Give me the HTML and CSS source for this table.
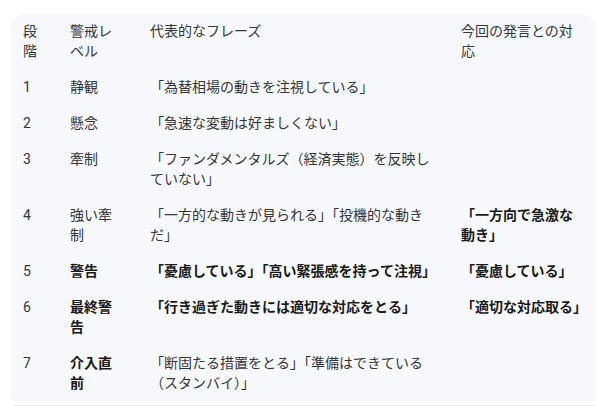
FILE: index.html
```html
<!DOCTYPE html>
<html lang="ja">
<head>
<meta charset="utf-8">
<link rel="stylesheet" href="styles.css">
</head>
<body>
<div class="wrap">
  <div class="card">
    <table class="tbl">
      <colgroup>
        <col class="c1"><col class="c2"><col class="c3"><col class="c4">
      </colgroup>
      <thead>
        <tr><th>段階</th><th>警戒レベル</th><th>代表的なフレーズ</th><th class="last">今回の発言との対応</th></tr>
      </thead>
      <tbody>
        <tr><td>1</td><td>静観</td><td>「為替相場の動きを注視している」</td><td class="last"></td></tr>
        <tr><td>2</td><td>懸念</td><td>「急速な変動は好ましくない」</td><td class="last"></td></tr>
        <tr><td>3</td><td>牽制</td><td>「ファンダメンタルズ（経済実態）を反映していない」</td><td class="last"></td></tr>
        <tr><td>4</td><td>強い牽制</td><td>「一方的な動きが見られる」「投機的な動きだ」</td><td class="last"><b>「一方向で急激な動き」</b></td></tr>
        <tr><td>5</td><td><b>警告</b></td><td><b>「憂慮している」「高い緊張感を持って注視」</b></td><td class="last"><b>「憂慮している」</b></td></tr>
        <tr><td>6</td><td><b>最終警告</b></td><td><b>「行き過ぎた動きには適切な対応をとる」</b></td><td class="last"><b>「適切な対応取る」</b></td></tr>
        <tr><td>7</td><td><b>介入直前</b></td><td>「断固たる措置をとる」「準備はできている（スタンバイ）」</td><td class="last"></td></tr>
      </tbody>
    </table>
  </div>
  <div class="rule"></div>
</div>
</body>
</html>
```

FILE: styles.css
```css
html, body {
  margin: 0;
  padding: 0;
  background: #ffffff;
}
body {
  font-family: Roboto, "Noto Sans CJK JP", sans-serif;
  font-size: 14px;
  color: #33363b;
}
.wrap {
  padding: 13px 17px 0 11px;
}
.card {
  background: #f7f8fc;
  border-radius: 16px 16px 4px 4px;
  width: 585px;
}
.tbl {
  border-collapse: collapse;
  table-layout: fixed;
  width: 585px;
}
.c1 { width: 47px; }
.c2 { width: 80px; }
.c3 { width: 311px; }
.c4 { width: 147px; }
.tbl th, .tbl td {
  padding: 8px 16px 8px 12px;
  line-height: 20px;
  text-align: left;
  vertical-align: top;
  font-weight: 400;
}
.tbl .last {
  padding-right: 13px;
}
.tbl b {
  font-weight: 700;
  color: #1a1a1a;
}
.rule {
  margin: 4px 2px 0 2px;
  height: 1px;
  width: 582px;
  background: #eceef2;
}
```
